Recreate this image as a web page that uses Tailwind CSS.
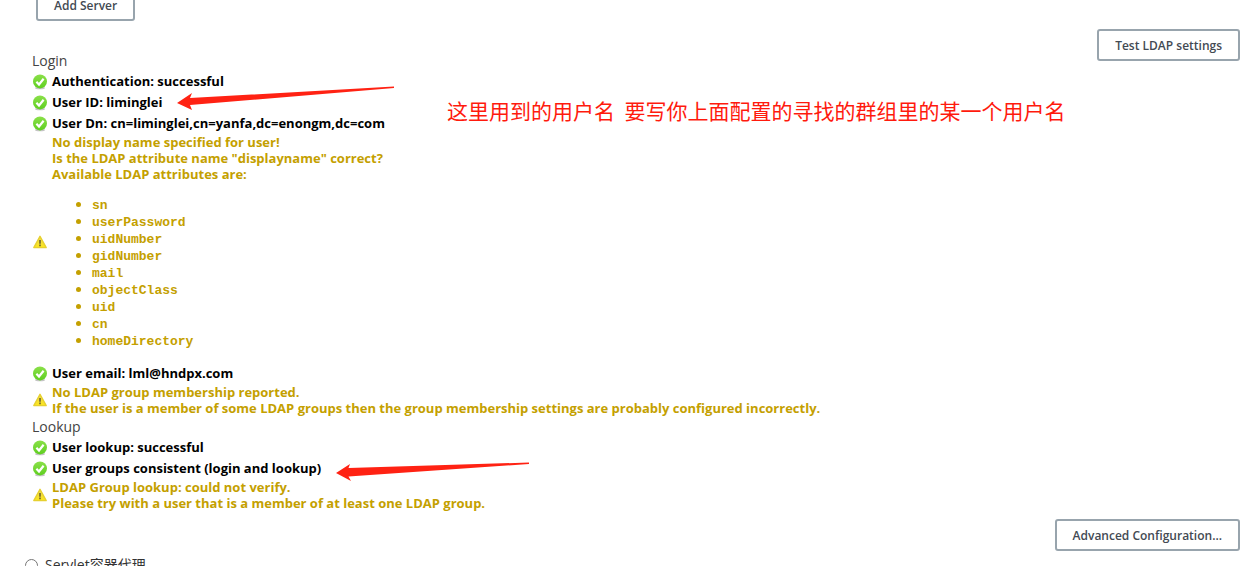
<!DOCTYPE html>
<html lang="en">
<head>
<meta charset="utf-8">
<title>LDAP settings</title>
<script src="https://cdn.jsdelivr.net/npm/@tailwindcss/browser@4"></script>
</head>
<body class="relative h-screen overflow-hidden bg-white font-['Open_Sans','Noto_Sans_CJK_SC',sans-serif] text-[13px] text-[#333]">
<svg class="absolute size-0">
  <defs>
    <linearGradient id="g" x1="0" y1="0" x2="0" y2="1"><stop offset="0" stop-color="#8be04a"/><stop offset="1" stop-color="#5fcf20"/></linearGradient>
    <linearGradient id="y" x1="0" y1="0" x2="0" y2="1"><stop offset="0" stop-color="#f0dc50"/><stop offset="1" stop-color="#fbe51c"/></linearGradient>
    <symbol id="ok" viewBox="0 0 16 16">
      <ellipse cx="8" cy="14" rx="5" ry="1.3" fill="#c4c4c4"/>
      <circle cx="8" cy="7.4" r="7" fill="url(#g)"/>
      <path d="M4.4 7.8l2.6 2.7L11.6 4.8" fill="none" stroke="#fff" stroke-width="2.2"/>
    </symbol>
    <symbol id="warn" viewBox="0 0 16 16">
      <path d="M8 2.3L14.2 13.6H1.8Z" fill="url(#y)" stroke="#e6d030" stroke-width="1.4" stroke-linejoin="round"/>
      <path d="M8 6v3.8M8 10.6v1.6" stroke="#6b6130" stroke-width="1.6"/>
    </symbol>
  </defs>
</svg>

<main class="-mt-[11px] pr-[9px] pl-8">
  <button type="button" class="ml-1 block h-8 rounded-[3px] border-2 border-[#98a4ad] bg-white px-4 pt-px text-[12px] font-semibold text-[#434a53]">Add Server</button>

  <div class="mt-2 flex items-start justify-between">
    <section class="pt-[21px] font-bold text-black">
      <h2 class="h-[21px] text-[14px] leading-[21px] font-normal text-[#444]">Login</h2>
      <div class="flex h-[21px] items-center gap-1"><svg class="size-4"><use href="#ok"/></svg><p>Authentication: successful</p></div>
      <div class="flex h-[21px] items-center gap-1"><svg class="size-4"><use href="#ok"/></svg><p>User ID: liminglei</p></div>
      <div class="flex h-[21px] items-center gap-1"><svg class="size-4"><use href="#ok"/></svg><p>User Dn: cn=liminglei,cn=yanfa,dc=enongm,dc=com</p></div>
      <div class="flex items-center gap-1 pb-[14px] leading-4 text-[#c4a000]">
        <svg class="size-4"><use href="#warn"/></svg>
        <div>
          <p>No display name specified for user!<br>Is the LDAP attribute name "displayname" correct?<br>Available LDAP attributes are:</p>
          <ul class="mt-[14px] list-disc pl-10 leading-[17px]">
            <li class="h-[17px]"><code class="font-['Liberation_Mono',monospace] text-[13px]">sn</code></li>
            <li class="h-[17px]"><code class="font-['Liberation_Mono',monospace] text-[13px]">userPassword</code></li>
            <li class="h-[17px]"><code class="font-['Liberation_Mono',monospace] text-[13px]">uidNumber</code></li>
            <li class="h-[17px]"><code class="font-['Liberation_Mono',monospace] text-[13px]">gidNumber</code></li>
            <li class="h-[17px]"><code class="font-['Liberation_Mono',monospace] text-[13px]">mail</code></li>
            <li class="h-[17px]"><code class="font-['Liberation_Mono',monospace] text-[13px]">objectClass</code></li>
            <li class="h-[17px]"><code class="font-['Liberation_Mono',monospace] text-[13px]">uid</code></li>
            <li class="h-[17px]"><code class="font-['Liberation_Mono',monospace] text-[13px]">cn</code></li>
            <li class="h-[17px]"><code class="font-['Liberation_Mono',monospace] text-[13px]">homeDirectory</code></li>
          </ul>
        </div>
      </div>
      <div class="flex h-[21px] items-center gap-1"><svg class="size-4"><use href="#ok"/></svg><p>User email: lml@hndpx.com</p></div>
      <div class="flex items-center gap-1 leading-4 text-[#c4a000]"><svg class="size-4"><use href="#warn"/></svg><p>No LDAP group membership reported.<br>If the user is a member of some LDAP groups then the group membership settings are probably configured incorrectly.</p></div>
      <h2 class="h-[21px] text-[14px] leading-[21px] font-normal text-[#444]">Lookup</h2>
      <div class="flex h-[21px] items-center gap-1"><svg class="size-4"><use href="#ok"/></svg><p>User lookup: successful</p></div>
      <div class="flex h-[21px] items-center gap-1"><svg class="size-4"><use href="#ok"/></svg><p>User groups consistent (login and lookup)</p></div>
      <div class="flex items-center gap-1 leading-4 text-[#c4a000]"><svg class="size-4"><use href="#warn"/></svg><p>LDAP Group lookup: could not verify.<br>Please try with a user that is a member of at least one LDAP group.</p></div>
    </section>
    <button type="button" class="h-8 shrink-0 rounded-[3px] border-2 border-[#98a4ad] bg-white px-4 pt-px text-[12px] font-semibold text-[#434a53]">Test LDAP settings</button>
  </div>

  <div class="mt-2 flex justify-end">
    <button type="button" class="h-8 rounded-[3px] border-2 border-[#98a4ad] bg-white px-4 pt-px text-[12px] font-semibold text-[#434a53]">Advanced Configuration...</button>
  </div>
  <label class="-ml-[7px] mt-1 flex items-center gap-[7px] text-[14px] leading-5"><input type="radio" name="realm" class="m-0 size-[13px]">Servlet容器代理</label>
</main>

<p class="absolute top-[94px] left-[447px] font-['Noto_Sans_CJK_SC',sans-serif] text-[21px] leading-8 font-normal whitespace-pre text-[#ff1a0d]">这里用到的用户名  要写你上面配置的寻找的群组里的某一个用户名</p>
<svg class="absolute top-[84px] left-[176px] h-[28px] w-[220px]" viewBox="0 0 220 28" fill="#ff2213"><path d="M1 19L16 9L14 14L218 2.5V4L14 21L16 26Z"/></svg>
<svg class="absolute top-[460px] left-[335px] h-[24px] w-[196px]" viewBox="0 0 196 24" fill="#ff2213"><path d="M1 13L15 4L13.5 8L194 2.500V4L13.5 16.500L16 21Z"/></svg>
</body>
</html>
